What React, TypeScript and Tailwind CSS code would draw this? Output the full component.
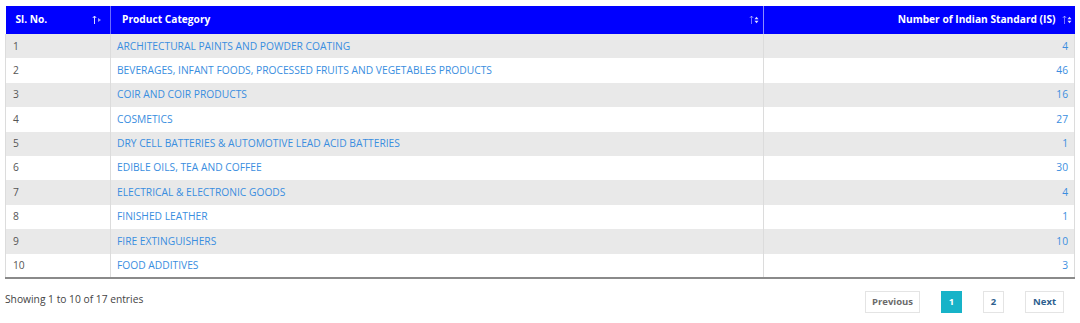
import React from "react";

const rows: [number, string, number][] = [
  [1, "ARCHITECTURAL PAINTS AND POWDER COATING", 4],
  [2, "BEVERAGES, INFANT FOODS, PROCESSED FRUITS AND VEGETABLES PRODUCTS", 46],
  [3, "COIR AND COIR PRODUCTS", 16],
  [4, "COSMETICS", 27],
  [5, "DRY CELL BATTERIES & AUTOMOTIVE LEAD ACID BATTERIES", 1],
  [6, "EDIBLE OILS, TEA AND COFFEE", 30],
  [7, "ELECTRICAL & ELECTRONIC GOODS", 4],
  [8, "FINISHED LEATHER", 1],
  [9, "FIRE EXTINGUISHERS", 10],
  [10, "FOOD ADDITIVES", 3],
];

function SortIcon({ active }: { active?: boolean }) {
  return (
    <svg width="10" height="10" viewBox="0 0 10 10" className="shrink-0">
      <path d="M2.5 1 L2.5 9" stroke="#d8d8ff" strokeWidth="1" opacity={active ? 1 : 0.55} />
      <path d="M0.8 3 L2.5 1 L4.2 3" stroke="#d8d8ff" strokeWidth="1" fill="none" opacity={active ? 1 : 0.55} />
      {active ? (
        <path d="M6 3 L9 5 L6 7 Z" fill="#9a9aff" />
      ) : (
        <>
          <path d="M5.5 4.3 L7.5 1.8 L9.5 4.3 Z" fill="#e0e0ff" />
          <path d="M5.5 5.7 L7.5 8.2 L9.5 5.7 Z" fill="#e0e0ff" />
        </>
      )}
    </svg>
  );
}

export default function App() {
  return (
    <div
      className="w-[1080px] h-[323px] bg-white px-[5px] pt-[6px] text-[10.25px]"
      style={{ fontFamily: '"Open Sans", "Noto Sans", sans-serif' }}
    >
      <table className="w-[1069px] border-collapse table-fixed border-b-2 border-b-[#8a8a8a]">
        <colgroup>
          <col className="w-[105px]" />
          <col className="w-[653px]" />
          <col className="w-[311px]" />
        </colgroup>
        <thead>
          <tr className="h-[28px] bg-[#0000ff] text-white font-bold text-[10.2px]">
            <th className="text-left pl-[10px] pr-[8px] border-r border-[#6b6bff]">
              <div className="flex items-center justify-between">
                <span>Sl. No.</span>
                <SortIcon active />
              </div>
            </th>
            <th className="text-left pl-[11px] pr-[4px] border-r border-[#8c8cff]">
              <div className="flex items-center justify-between">
                <span>Product Category</span>
                <SortIcon />
              </div>
            </th>
            <th className="text-right pr-[3px]">
              <div className="flex items-center justify-end gap-[6px]">
                <span>Number of Indian Standard (IS)</span>
                <SortIcon />
              </div>
            </th>
          </tr>
        </thead>
        <tbody>
          {rows.map(([n, name, c], i) => (
            <tr
              key={n}
              className={`h-[24.4px] ${i % 2 === 0 ? "bg-[#e9e9e9]" : "bg-white"}`}
            >
              <td className="pl-[7px] text-[#555] border-l border-[#dcdcdc] border-r">
                {n}
              </td>
              <td className="pl-[6px] text-[#3a8ee0] border-r border-[#dcdcdc]">
                {name}
              </td>
              <td className="text-right pr-[6px] text-[#3a8ee0] border-r border-[#dcdcdc]">
                {c}
              </td>
            </tr>
          ))}
        </tbody>
      </table>
      <div className="flex items-start justify-between mt-[12px]">
        <span className="text-[#444] text-[10.25px] mt-[1px]">Showing 1 to 10 of 17 entries</span>
        <div className="flex items-center gap-[21px] mr-[11px] text-[9.5px] font-bold">
          <span className="h-[22px] px-[6px] flex items-center border border-[#e4e4e4] text-[#6b6b6b]">
            Previous
          </span>
          <span className="h-[22px] w-[21px] flex items-center justify-center bg-[#17b3c8] text-white">
            1
          </span>
          <span className="h-[22px] w-[21px] flex items-center justify-center border border-[#e4e4e4] text-[#2e5f8f]">
            2
          </span>
          <span className="h-[22px] px-[7px] flex items-center border border-[#e4e4e4] text-[#2e5f8f]">
            Next
          </span>
        </div>
      </div>
    </div>
  );
}
